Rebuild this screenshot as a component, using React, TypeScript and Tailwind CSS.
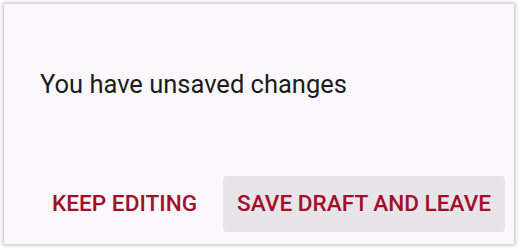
import React from "react";

export default function App(): React.JSX.Element {
    return (
        <div className="w-[520px] h-[250px] bg-white p-1" style={{ fontFamily: "Roboto, sans-serif" }}>
            <div className="w-[510px] h-[240px] bg-[#faf8fb] shadow-[0_0_4px_1px_rgba(0,0,0,0.28)] flex flex-col">
                {/* Message */}
                <p className="pl-9 pt-[64px] text-[25.5px] leading-[32px] text-[#1d1b20]">You have unsaved changes</p>

                {/* Actions */}
                <div className="mt-auto mb-3 mr-[9px] flex items-center justify-end gap-3">
                    <button className="h-14 px-[14px] rounded text-[22.6px] font-medium text-[#a50e2a]">
                        KEEP EDITING
                    </button>
                    <button className="h-14 px-[14px] rounded bg-[#e7e5e9] text-[22.6px] font-medium text-[#a50e2a]">
                        SAVE DRAFT AND LEAVE
                    </button>
                </div>
            </div>
        </div>
    );
}
